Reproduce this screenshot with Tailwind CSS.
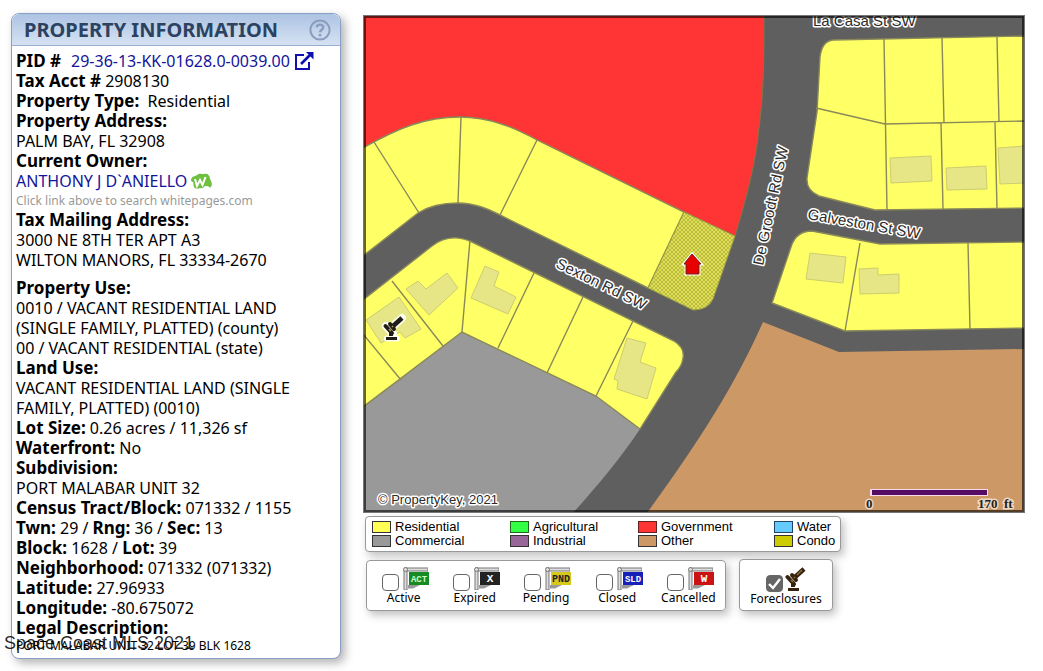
<!DOCTYPE html>
<html lang="en">
<head>
  <meta charset="UTF-8">
  <title>Property Information</title>
  <meta name="viewport" content="width=device-width, initial-scale=1.0">
  <script src="https://cdn.jsdelivr.net/npm/@tailwindcss/browser@4"></script>
</head>
<body class="bg-white text-black font-['Noto_Sans',sans-serif] relative">

  <main class="flex items-start pl-[11px] pr-[18px] pt-[13px] pb-3 gap-[22px]">

    <!-- Property details -->
    <aside class="w-[330px] shrink-0 rounded-lg border border-[#8a9fc4] bg-white shadow-[4px_4px_10px_rgba(0,0,0,0.3)]">
      <header class="flex items-center justify-between h-8 pl-3 pr-2 rounded-t-lg border-b border-[#9aaed2] bg-gradient-to-b from-[#adc3e3] to-[#d6e2f3]">
        <h2 class="text-xl font-bold text-[#2b4260]">PROPERTY INFORMATION</h2>
        <button type="button" aria-label="Help">
          <svg class="w-6 h-6" viewBox="0 0 24 24" fill="none" stroke="#8a9dbd" stroke-width="2">
            <circle cx="12" cy="12" r="9.6"/>
            <path d="M8.7 9.4C8.9 5.6 15.3 5.8 15.2 9.5C15.1 11.8 12.1 11.7 12 14.4" stroke-width="2.4"/>
            <path d="M12 16v2.4" stroke-width="2.6"/>
          </svg>
        </button>
      </header>

      <div class="px-1 pt-[5px] pb-1 text-base leading-5 [&_b]:text-[17px] [&_b]:leading-4">
        <p class="flex items-center h-5"><b>PID #</b>
          <a href="#" class="ml-2.5 flex items-center gap-1 text-[#14149a]">29-36-13-KK-01628.0-0039.00
            <svg class="w-5 h-5" viewBox="0 0 20 20" fill="none" stroke="#1010b0" stroke-width="2">
              <path d="M10 4H2v14h13V11"/>
              <path d="M7 13L16 4" stroke-width="2.6"/>
              <path d="M12 1h7.500v7.500z" fill="#1010b0" stroke="none"/>
            </svg>
          </a>
        </p>
        <p><b>Tax Acct #</b> 2908130</p>
        <p><b>Property Type:</b> &nbsp;Residential</p>
        <p><b>Property Address:</b></p>
        <p>PALM BAY, FL 32908</p>
        <p><b>Current Owner:</b></p>
        <p>
          <a href="#" class="flex items-center gap-1 text-[#14149a]">ANTHONY J D`ANIELLO
            <svg class="w-[21px] h-4" viewBox="0 0 21 16">
              <path d="M0 7C1 2 4 4 6 2c2-2 5-1 7-1c3-1 6 1 6 5c1 2 3 5 1 8c-1 1-2 0-3-1c-1 1-3-1-4 1c-2 2-3 1-4 1c-2 1-5 1-6-1c-1-2 0-4-1-5c-1 0-2-1-2-2z" fill="#6fc03f"/>
              <path d="M4 6l2 7l3-6l2.500 5l3-8" fill="none" stroke="#fff" stroke-width="2"/>
            </svg>
          </a>
        </p>
        <p class="text-xs leading-[19px] text-[#999]">Click link above to search whitepages.com</p>
        <p><b>Tax Mailing Address:</b></p>
        <p>3000 NE 8TH TER APT A3</p>
        <p>WILTON MANORS, FL 33334-2670</p>
        <p class="mt-2"><b>Property Use:</b></p>
        <p>0010 / VACANT RESIDENTIAL LAND<br>(SINGLE FAMILY, PLATTED) (county)</p>
        <p>00 / VACANT RESIDENTIAL (state)</p>
        <p><b>Land Use:</b></p>
        <p>VACANT RESIDENTIAL LAND (SINGLE<br>FAMILY, PLATTED) (0010)</p>
        <p><b>Lot Size:</b> 0.26 acres / 11,326 sf</p>
        <p><b>Waterfront:</b> No</p>
        <p><b>Subdivision:</b></p>
        <p>PORT MALABAR UNIT 32</p>
        <p><b>Census Tract/Block:</b> 071332 / 1155</p>
        <p><b>Twn:</b> 29 / <b>Rng:</b> 36 / <b>Sec:</b> 13</p>
        <p><b>Block:</b> 1628 / <b>Lot:</b> 39</p>
        <p><b>Neighborhood:</b> 071332 (071332)</p>
        <p><b>Latitude:</b> 27.96933</p>
        <p><b>Longitude:</b> -80.675072</p>
        <p><b>Legal Description:</b></p>
        <p class="text-xs leading-4">PORT MALABAR UNIT 32 LOT 39 BLK 1628</p>
      </div>
    </aside>

    <section class="flex-1 min-w-0 pt-0.5">
      <!-- Parcel map -->
      <svg class="block w-full h-auto" viewBox="363 15 662 498" font-family="Liberation Sans, Arial, sans-serif">
        <defs>
          <pattern id="hatch" width="4" height="4" patternUnits="userSpaceOnUse">
            <rect width="4" height="4" fill="#dfdf55"/>
            <path d="M0 0L4 4M4 0L0 4" stroke="#b4b43c" stroke-width="0.8"/>
          </pattern>
          <clipPath id="frame"><rect x="363" y="15" width="662" height="498"/></clipPath>
          <g id="gavel" fill="none">
            <path d="M9 12L19 3" stroke-width="4.6"/>
            <path d="M2.500 11L9 18" stroke-width="4" stroke-linecap="round"/>
            <path d="M7 9L11 14" stroke-width="4" stroke-linecap="round"/>
            <path d="M8 17V21" stroke-width="4"/>
            <path d="M3 23.500H14" stroke-width="3"/>
          </g>
        </defs>
        <g clip-path="url(#frame)">
          <rect x="363" y="15" width="662" height="498" fill="#5f5f5f"/>
          <!-- Government -->
          <path d="M363 15H764C764 55 764 90 759 128C756 162 746 200 735 236L684 212L537 140C515 128 490 117 460 117C425 117 398 128 363 148z" fill="#ff3434" stroke="#85754a"/>
          <!-- Other, commercial -->
          <path d="M763 322L839 352L1025 349V513H647C700 440 735 385 763 322z" fill="#cc9865"/>
          <path d="M363 407L462 332L596 396L640 429C620 459 598 485 573 513H363z" fill="#999"/>

          <g fill="#ffff66" stroke="#89895a" stroke-width="1.4">
            <!-- Sexton Rd, north side -->
            <path d="M363 148C398 128 425 117 460 117C490 117 515 128 537 140L684 212L648 288L500 215C488 209 475 203 458 203C442 203 429 206 418 213L363 256z"/>
            <path d="M374 142L419 213M461 117L458 203M537 140L500 215" fill="none"/>
            <!-- Sexton Rd, south side -->
            <path d="M363 300L432 246Q450 232 472 242L674 341Q685 348 683 358Q682 366 676 372L640 429L596 396L462 332L363 407z"/>
            <path d="M392 281L443 346M363 334L401 380M470 240L462 332M534 273L498 348M583 297L547 373M633 321L596 396" fill="none"/>
            <!-- La Casa / Galveston block -->
            <path d="M833 40L1025 36V208L875 210L819 196Q806 190 807 178L817 112L820 57Q822 41 833 40z"/>
            <path d="M816 108L885 124L1025 121M884 39L887 210M942 38L944 123M997 37L999 122M941 123L943 209M995 122L997 209" fill="none"/>
            <path d="M812 231L880 244L1025 242V328L845 331L772 303L791 247Q796 231 812 231z"/>
            <path d="M860 243L845 331M968 243L970 329" fill="none"/>
          </g>
          <path d="M684 212L735 236L713 299Q708 310 693 310L648 288z" fill="url(#hatch)" stroke="#9b9b45"/>

          <!-- Buildings -->
          <g fill="#e6e687" stroke="#cdcd70">
            <path d="M406 289L418 281L426 289L447 273L458 288L429 315z"/>
            <path d="M485 266L499 272L494 286L516 297L508 314L471 298z"/>
            <path d="M366 320L399 297L421 329L405 338L400 332L381 343z"/>
            <path d="M627 338L646 343L640 362L656 368L647 399L617 389L618 381L614 379z"/>
            <path d="M890 158L931 156L932 181L891 183z"/>
            <path d="M946 168L986 166L987 189L947 190z"/>
            <path d="M998 148L1025 146V183L1000 184z"/>
            <path d="M810 253L846 257L843 283L806 279z"/>
            <path d="M859 269L878 268V275L899 274V293L860 294z"/>
          </g>

          <!-- Labels -->
          <g font-size="15" fill="#2b2b2b" stroke="#fff" stroke-width="3" stroke-linejoin="round" paint-order="stroke">
            <text x="813" y="26">La Casa St SW</text>
            <text transform="translate(763 266) rotate(-78)">De Groodt Rd SW</text>
            <text transform="translate(807 219) rotate(10)">Galveston St SW</text>
            <text transform="translate(555 267) rotate(26)">Sexton Rd SW</text>
            <text x="378" y="504" font-size="13">© PropertyKey, 2021</text>
          </g>
          <rect x="870" y="489" width="118" height="7" fill="#f7d9ee"/>
          <rect x="872" y="490" width="115" height="5" fill="#550a63"/>
          <g font-family="Liberation Serif, serif" font-size="13" font-weight="bold" fill="#222" stroke="#eed8c4" stroke-width="3" paint-order="stroke">
            <text x="866" y="508">0</text>
            <text x="978" y="508">170&#160; ft</text>
          </g>

          <!-- Subject and foreclosure markers -->
          <path d="M692 254L701 264H699V274H686V264H684z" fill="#e00" stroke="#fff" stroke-width="3" paint-order="stroke"/>
          <path d="M692 254L701 264H699V274H686V264H684z" fill="#e80000" stroke="#721"/>
          <g stroke="#fffff0" stroke-linecap="round" fill="none">
            <path d="M392 327L402 318" stroke-width="8"/>
            <path d="M386 326L393 334" stroke-width="8"/>
            <path d="M387 338.500H397" stroke-width="6"/>
          </g>
          <use href="#gavel" x="383" y="315" stroke="#201c18"/>
          <path d="M389 329L391 331M392 326L393 327" stroke="#b8a04a" stroke-width="1.5"/>
        </g>
        <rect x="363.500" y="15.500" width="661" height="497" fill="none" stroke="#777"/>
        <rect x="365" y="17" width="658" height="494" fill="none" stroke="#000" stroke-opacity="0.6" stroke-width="2"/>
      </svg>

      <!-- Land use legend -->
      <ul class="mt-[3px] ml-0.5 w-[476px] h-9 grid grid-flow-col grid-rows-[14px_14px] grid-cols-[138px_128px_136px_1fr] content-center pl-1.5 rounded border border-[#999] bg-white shadow-[3px_4px_8px_rgba(0,0,0,0.25)] font-['Liberation_Sans',sans-serif] text-[13px] leading-[14px]">
        <li class="flex items-center gap-1"><span class="w-[19px] h-3 border border-[#333] bg-[#ffff55]"></span>Residential</li>
        <li class="flex items-center gap-1"><span class="w-[19px] h-3 border border-[#333] bg-[#999]"></span>Commercial</li>
        <li class="flex items-center gap-1"><span class="w-[19px] h-3 border border-[#262] bg-[#33ff44]"></span>Agricultural</li>
        <li class="flex items-center gap-1"><span class="w-[19px] h-3 border border-[#333] bg-[#996699]"></span>Industrial</li>
        <li class="flex items-center gap-1"><span class="w-[19px] h-3 border border-[#622] bg-[#ff3434]"></span>Government</li>
        <li class="flex items-center gap-1"><span class="w-[19px] h-3 border border-[#333] bg-[#cc9865]"></span>Other</li>
        <li class="flex items-center gap-1"><span class="w-[19px] h-3 border border-[#246] bg-[#66ccff]"></span>Water</li>
        <li class="flex items-center gap-1"><span class="w-[19px] h-3 border border-[#333] bg-[#cccc00]"></span>Condo</li>
      </ul>

      <!-- Listing status filters -->
      <form class="mt-[7px] ml-[3px] flex items-end gap-[13px] text-xs leading-[14px]">
        <fieldset class="w-[360px] h-[51px] grid grid-cols-5 px-px pt-1.5 rounded border border-[#999] bg-white shadow-[3px_4px_8px_rgba(0,0,0,0.25)]">
          <label class="flex flex-col items-center">
            <span class="flex items-end gap-1 pl-1">
              <input type="checkbox" class="appearance-none w-[17px] h-[17px] rounded border border-[#666] bg-white">
              <svg class="w-[26px] h-6" viewBox="0 0 26 24"><use href="#pole"/><path d="M5 18h12l-7 3.500H5z" fill="#999"/><rect x="6" y="5" width="20" height="13" fill="#168a25"/><text x="16" y="15" font-size="9" font-weight="bold" font-family="Liberation Mono, monospace" fill="#c8ffc8" text-anchor="middle">ACT</text></svg>
            </span>
            Active
          </label>
          <label class="flex flex-col items-center">
            <span class="flex items-end gap-1 pl-1">
              <input type="checkbox" class="appearance-none w-[17px] h-[17px] rounded border border-[#666] bg-white">
              <svg class="w-[26px] h-6" viewBox="0 0 26 24"><use href="#pole"/><path d="M5 18h12l-7 3.500H5z" fill="#999"/><rect x="6" y="5" width="20" height="13" fill="#222"/><text x="16" y="15" font-size="11" font-weight="bold" font-family="Liberation Mono, monospace" fill="#fff" text-anchor="middle">X</text></svg>
            </span>
            Expired
          </label>
          <label class="flex flex-col items-center">
            <span class="flex items-end gap-1 pl-1">
              <input type="checkbox" class="appearance-none w-[17px] h-[17px] rounded border border-[#666] bg-white">
              <svg class="w-[26px] h-6" viewBox="0 0 26 24"><use href="#pole"/><path d="M5 18h12l-7 3.500H5z" fill="#999"/><rect x="6" y="5" width="20" height="13" fill="#d7c91c"/><text x="16" y="15" font-size="10" font-weight="bold" font-family="Liberation Mono, monospace" fill="#222" text-anchor="middle">PND</text></svg>
            </span>
            Pending
          </label>
          <label class="flex flex-col items-center">
            <span class="flex items-end gap-1 pl-1">
              <input type="checkbox" class="appearance-none w-[17px] h-[17px] rounded border border-[#666] bg-white">
              <svg class="w-[26px] h-6" viewBox="0 0 26 24"><use href="#pole"/><path d="M5 18h12l-7 3.500H5z" fill="#999"/><rect x="6" y="5" width="20" height="13" fill="#1720b8"/><text x="16" y="15" font-size="9" font-weight="bold" font-family="Liberation Mono, monospace" fill="#fff" text-anchor="middle">SLD</text></svg>
            </span>
            Closed
          </label>
          <label class="flex flex-col items-center">
            <span class="flex items-end gap-1 pl-1">
              <input type="checkbox" class="appearance-none w-[17px] h-[17px] rounded border border-[#666] bg-white">
              <svg class="w-[26px] h-6" viewBox="0 0 26 24"><use href="#pole"/><path d="M5 18h12l-7 3.500H5z" fill="#999"/><rect x="6" y="5" width="20" height="13" fill="#cc1212"/><text x="16" y="15" font-size="11" font-weight="bold" font-family="Liberation Mono, monospace" fill="#fff" text-anchor="middle">W</text></svg>
            </span>
            Cancelled
          </label>
        </fieldset>

        <label class="w-[94px] h-[52px] flex flex-col items-center pt-1.5 rounded border border-[#999] bg-white shadow-[3px_4px_8px_rgba(0,0,0,0.25)]">
          <span class="flex items-end gap-0.5">
            <span class="grid">
              <input type="checkbox" checked class="peer col-start-1 row-start-1 appearance-none w-[17px] h-[17px] rounded-sm border border-[#666] bg-white checked:bg-[#666]">
              <svg class="hidden peer-checked:block col-start-1 row-start-1 w-[17px] h-[17px] pointer-events-none" viewBox="0 0 17 17"><path d="M3 9l4 4l7-9" fill="none" stroke="#fff" stroke-width="2.4"/></svg>
            </span>
            <svg class="w-[22px] h-[26px]" viewBox="0 0 22 26"><use href="#gavel" stroke="#35230f"/><path d="M12 9L17 4M6 14L8 16M9 11L10 12" stroke="#94713a" stroke-width="1.4"/></svg>
          </span>
          Foreclosures
        </label>
      </form>
    </section>
  </main>

  <p class="absolute left-1 top-[633px] text-lg leading-5 font-['Liberation_Sans',sans-serif] text-black/85">Space Coast MLS 2021</p>

  <svg class="hidden">
    <defs>
      <g id="pole">
        <path d="M2.500 3V23M1 2.500H25" stroke="#777" stroke-width="4"/>
        <path d="M2.500 3V22.500M2 2.500H24.500" stroke="#ddd" stroke-width="2"/>
        <circle cx="2.500" cy="2.500" r="2" fill="#ddd" stroke="#777"/>
      </g>
    </defs>
  </svg>

</body>
</html>
